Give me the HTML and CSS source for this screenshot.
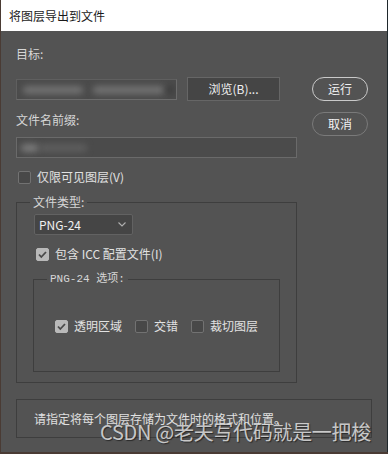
FILE: index.html
```html
<!DOCTYPE html>
<html lang="zh-CN">
<head>
  <meta charset="UTF-8" />
  <title>将图层导出到文件</title>
  <link rel="stylesheet" href="styles.css">
</head>
<body>
<div class="dialog">
  <div class="titlebar">将图层导出到文件</div>

  <div class="panel">
    <div class="top">
      <div class="main">
        <div class="label">目标:</div>
        <div class="target-row">
          <div class="field field-target">
            <span class="blur b1"></span>
            <span class="blur b2"></span>
            <span class="blur b3"></span>
          </div>
          <button class="btn browse">浏览(B)...</button>
        </div>

        <div class="label prefix-label">文件名前缀:</div>
        <div class="field field-prefix">
          <span class="blur b4"></span>
          <span class="blur b5"></span>
        </div>

        <label class="check visible-only"><span class="box"></span>仅限可见图层(V)</label>

        <div class="group type-group">
          <div class="legend type-legend">文件类型:</div>
          <div class="select">
            PNG-24
            <svg class="chevron" width="8" height="5" viewBox="0 0 8 5"><polyline points="0.5,0.5 4,4 7.5,0.5" fill="none" stroke="#b0b0b0" stroke-width="1.1"/></svg>
          </div>
          <label class="check icc">
            <span class="box checked"><svg width="13" height="13" viewBox="0 0 13 13"><polyline points="3,6.5 5.3,9 10,4" fill="none" stroke="#4a4a4a" stroke-width="1.8"/></svg></span>包含 ICC 配置文件(I)
          </label>

          <div class="group png-group">
            <div class="legend png-legend">PNG-24 选项:</div>
            <div class="options">
              <label class="check"><span class="box checked"><svg width="13" height="13" viewBox="0 0 13 13"><polyline points="3,6.5 5.3,9 10,4" fill="none" stroke="#4a4a4a" stroke-width="1.8"/></svg></span>透明区域</label>
              <label class="check"><span class="box"></span>交错</label>
              <label class="check"><span class="box"></span>裁切图层</label>
            </div>
          </div>
        </div>
      </div>

      <div class="side">
        <button class="pill run">运行</button>
        <button class="pill">取消</button>
      </div>
    </div>

    <div class="hint">请指定将每个图层存储为文件时的格式和位置。</div>
  </div>

  <div class="watermark">CSDN @老夫写代码就是一把梭</div>
</div>
</body>
</html>
```

FILE: styles.css
```css
body {
  margin: 0;
  background: #4a3b34;
  font-family: "Noto Sans CJK SC", "Noto Sans", sans-serif;
  font-size: 12px;
  line-height: 16px;
  color: #e2e2e2;
}

.dialog {
  position: relative;
  width: 386px;
  height: 452px;
  margin-left: 1px;
  background: #535353;
  border-right: 1px solid #1f282c;
}

.titlebar {
  height: 31px;
  line-height: 31px;
  padding-left: 8px;
  background: #ffffff;
  color: #1a1a1a;
}

.panel {
  padding: 15px 0 0 15px;
}

.top {
  display: flex;
}

.main {
  width: 281px;
}

.label {
  height: 16px;
  color: #d6d6d6;
}

.target-row {
  display: flex;
  align-items: center;
  margin-top: 15px;
  height: 24px;
}

.field {
  position: relative;
  box-sizing: border-box;
  height: 21px;
  background: #4b4b4b;
  border: 1px solid #5f5f5f;
  border-bottom-color: #6c6c6c;
  border-right-color: #6c6c6c;
  overflow: hidden;
}

.field-target {
  width: 161px;
}

.field-prefix {
  width: 281px;
  margin-top: 9px;
  border-color: #6a6a6a;
}

.blur {
  position: absolute;
  top: 6px;
  height: 8px;
  border-radius: 4px;
  background: #727272;
  filter: blur(3px);
}

.b1 { left: 6px; width: 60px; }
.b2 { left: 76px; width: 72px; }
.b3 { left: 148px; width: 10px; background: #3e3e3e; }
.b4 { left: 4px; width: 18px; background: #7a7a7a; }
.b5 { left: 22px; width: 48px; background: #5e5e5e; }

.btn {
  font: inherit;
  color: #f0f0f0;
  background: #454545;
  border: 1px solid #666666;
  padding: 0;
}

.browse {
  width: 93px;
  height: 24px;
  margin-left: 10px;
}

.prefix-label {
  margin-top: 11px;
}

.check {
  display: flex;
  align-items: center;
  height: 16px;
}

.box {
  box-sizing: border-box;
  width: 13px;
  height: 13px;
  margin-right: 6px;
  background: #484848;
  border: 1px solid #727272;
  border-radius: 2px;
}

.box.checked {
  background: #b9b9b9;
  border-color: #b9b9b9;
}

.box svg {
  display: block;
  margin: -1px;
}

.visible-only {
  margin-top: 11px;
  margin-left: 2px;
}

.group {
  box-sizing: border-box;
  border: 1px solid #3e3e3e;
}

.legend {
  width: max-content;
  height: 16px;
  margin-top: -9px;
  padding: 0 3px;
  background: #535353;
  color: #d6d6d6;
}

.type-group {
  margin-top: 17px;
  padding: 0 0 10px 17px;
}

.type-legend {
  margin-left: -4px;
}

.select {
  display: flex;
  align-items: center;
  justify-content: space-between;
  box-sizing: border-box;
  width: 99px;
  height: 21px;
  margin-top: 4px;
  padding: 0 6px 0 4px;
  background: #454545;
  border: 1px solid #626262;
  border-radius: 2px;
  color: #f0f0f0;
}

.icc {
  margin-top: 11px;
  margin-left: 2px;
}

.png-group {
  width: 247px;
  margin-top: 17px;
  margin-left: -1px;
  padding-bottom: 37px;
}

.png-legend {
  margin-left: 13px;
  font-family: "Liberation Mono", "Noto Sans CJK SC", monospace;
  font-size: 11px;
}

.options {
  display: flex;
  justify-content: center;
  gap: 13px;
  margin-top: 31px;
}

.side {
  display: flex;
  flex-direction: column;
  gap: 11px;
  margin-left: 15px;
  padding-top: 31px;
}

.pill {
  width: 56px;
  height: 24px;
  padding: 0;
  font: inherit;
  color: #f2f2f2;
  background: transparent;
  border: 1px solid #7a7a7a;
  border-radius: 12px;
}

.pill.run {
  border-color: #c9c9c9;
}

.hint {
  box-sizing: border-box;
  width: 356px;
  height: 39px;
  margin-top: 16px;
  padding-left: 17px;
  line-height: 37px;
  border: 1px solid #3e3e3e;
  color: #e0e0e0;
}

.watermark {
  position: absolute;
  left: 99px;
  top: 422px;
  font-size: 20px;
  line-height: 20px;
  letter-spacing: -0.3px;
  color: rgba(225, 225, 225, 0.85);
  text-shadow: 1px 1px 1px rgba(0, 0, 0, 0.5);
  white-space: nowrap;
}
```
